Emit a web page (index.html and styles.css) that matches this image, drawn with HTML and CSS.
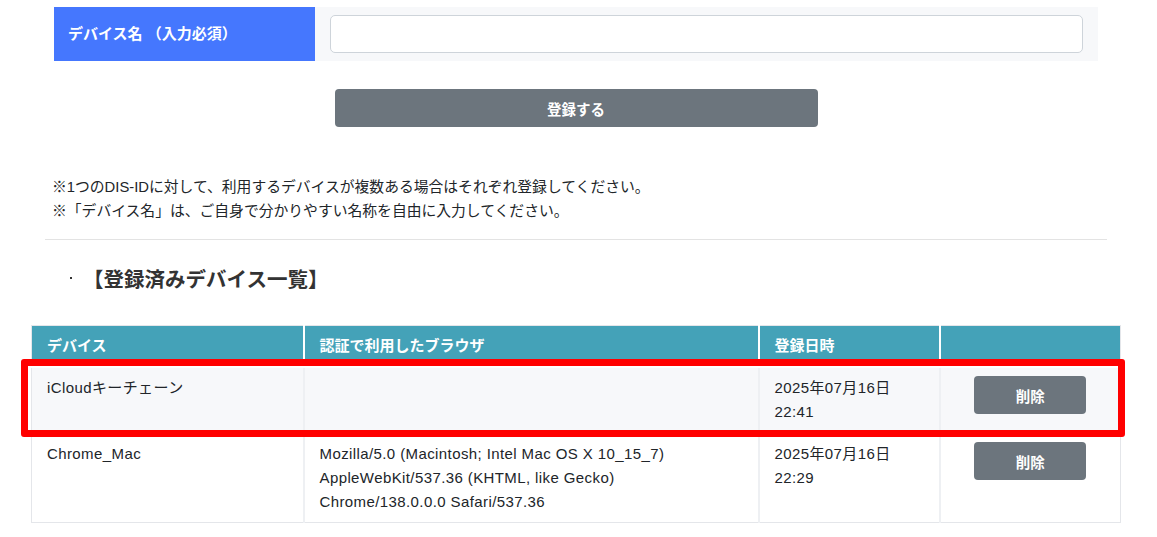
FILE: index.html
```html
<!DOCTYPE html>
<html lang="ja">
<head>
    <meta charset="utf-8">
    <title>デバイス登録</title>
    <link rel="stylesheet" href="styles.css">
</head>
<body>
<div class="page">
    <form class="regist" action="#">
        <div class="form-row">
            <label class="form-label" for="deviceName">デバイス名 （入力必須）</label>
            <div class="form-field"><input id="deviceName" type="text" class="form-input"></div>
        </div>
        <div class="submit-wrap"><button type="button" class="btn btn-submit">登録する</button></div>
    </form>

    <div class="notes">
        <p>※1つのDIS-IDに対して、利用するデバイスが複数ある場合はそれぞれ登録してください。</p>
        <p>※「デバイス名」は、ご自身で分かりやすい名称を自由に入力してください。</p>
    </div>

    <hr class="line">

    <h2 class="list-title"><span class="dot"></span>【登録済みデバイス一覧】</h2>

    <div class="table-wrap">
        <table class="device-table">
            <colgroup>
                <col class="c1"><col class="c2"><col class="c3"><col class="c4">
            </colgroup>
            <thead>
                <tr><th>デバイス</th><th>認証で利用したブラウザ</th><th>登録日時</th><th></th></tr>
            </thead>
            <tbody>
                <tr class="odd">
                    <td>iCloudキーチェーン</td>
                    <td></td>
                    <td>2025年07月16日<br>22:41</td>
                    <td class="act"><button type="button" class="btn btn-del">削除</button></td>
                </tr>
                <tr>
                    <td>Chrome_Mac</td>
                    <td>Mozilla/5.0 (Macintosh; Intel Mac OS X 10_15_7)<br>AppleWebKit/537.36 (KHTML, like Gecko)<br>Chrome/138.0.0.0 Safari/537.36</td>
                    <td>2025年07月16日<br>22:29</td>
                    <td class="act"><button type="button" class="btn btn-del">削除</button></td>
                </tr>
            </tbody>
        </table>
        <div class="mark"></div>
    </div>
</div>
</body>
</html>
```

FILE: styles.css
```css
*{margin:0;padding:0;box-sizing:border-box;}
body{font-family:"Liberation Sans","Noto Sans CJK JP",sans-serif;font-size:15px;line-height:24px;color:#212529;background:#fff;}

.page{width:1090px;margin-left:31px;padding-top:7px;}

/* 登録フォーム */
.form-row{display:flex;height:54px;margin:0 23px;}
.form-label{width:261px;background:#4577fe;color:#fff;font-weight:bold;padding-left:14px;display:flex;align-items:center;}
.form-field{flex:1;background:#f7f8fa;padding:8px 15px;}
.form-input{width:100%;height:38px;border:1px solid #ced4da;border-radius:5px;background:#fff;}

.btn{border:0;border-radius:4px;background:#6c757d;color:#fff;font-family:inherit;font-size:14.5px;font-weight:bold;cursor:pointer;}
.submit-wrap{display:flex;justify-content:center;margin-top:28px;}
.btn-submit{width:483px;height:38px;}

.notes{margin-top:48px;padding-left:21px;font-size:14.8px;}

.line{margin:16px 14px 0;border:0;border-top:1px solid #e3e3e3;}

.list-title{margin-top:25px;padding-left:39px;font-size:20.5px;line-height:30px;font-weight:bold;color:#333;display:flex;align-items:center;}
.list-title .dot{width:2px;height:2px;background:#333;margin:0 11px 4px 0;}

/* 一覧 */
.table-wrap{position:relative;margin-top:30px;}
.device-table{width:100%;border-collapse:collapse;table-layout:fixed;border:1px solid #e4e6ea;}
.device-table .c1{width:272px;}
.device-table .c2{width:455px;}
.device-table .c3{width:181px;}
.device-table th{background:#44a2b8;color:#fff;font-weight:bold;text-align:left;padding:8px 15px;border-left:2px solid #fff;}
.device-table th:first-child{border-left:0;}
.device-table td{padding:8px 15px;vertical-align:top;letter-spacing:0.4px;border-left:2px solid #eef0f3;border-top:2px solid #eef0f3;}
.device-table td:first-child{border-left:0;}
.device-table tr.odd td{background:#f7f8fa;border-top:2px solid #fff;}
.device-table td.act{text-align:center;letter-spacing:0;}
.btn-del{width:112px;height:38px;}

.mark{position:absolute;left:-10px;top:34px;width:1104px;height:78px;border:7px solid #f00;border-radius:3px;}
```
